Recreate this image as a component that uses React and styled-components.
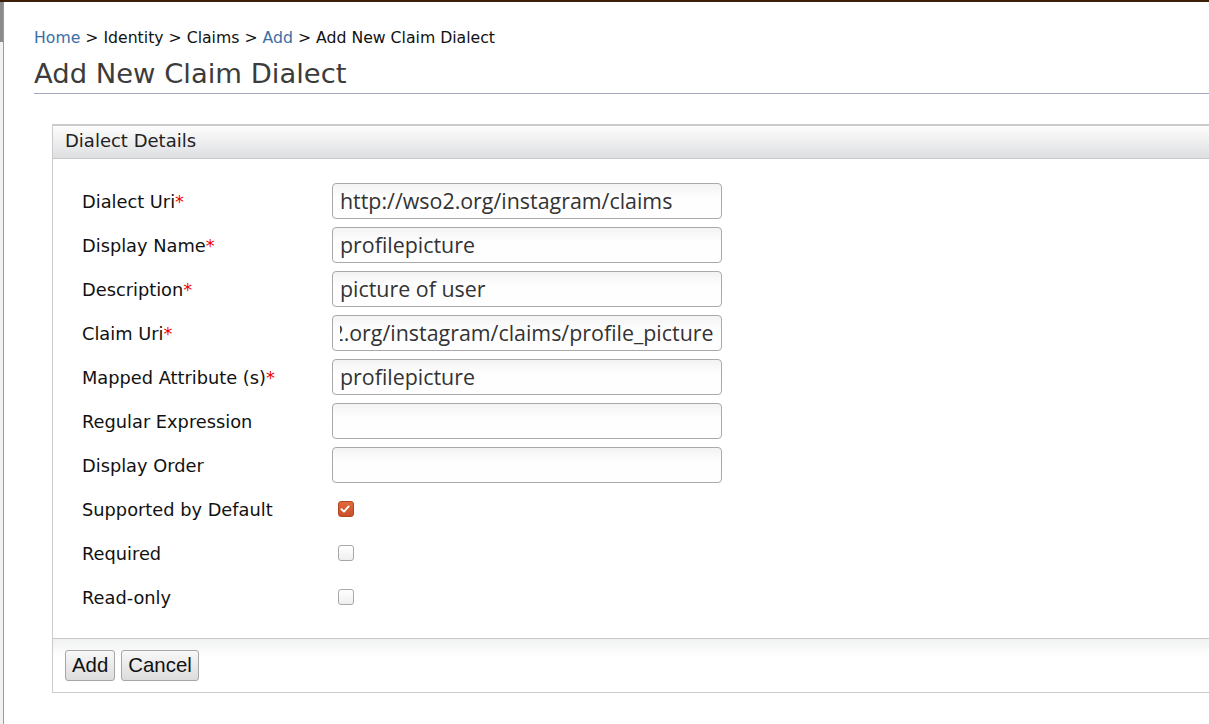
import React, { useEffect, useRef } from 'react';
import styled, { createGlobalStyle } from 'styled-components';

const GlobalStyle = createGlobalStyle`
  html, body {
    margin: 0;
    padding: 0;
    background: #fff;
    overflow: hidden;
    font-family: "DejaVu Sans", Verdana, sans-serif;
  }
`;

const TopBar = styled.div`
  height: 2px;
  background: #3b1f06;
`;

const Shell = styled.div`
  display: flex;
  min-height: 722px;
`;

const SideStrip = styled.div`
  width: 3px;
  flex: none;
  border-right: 1px solid #9a9a9a;
  background: linear-gradient(#8a8a8a 0, #8a8a8a 40px, #f1f1f1 40px);
`;

const Main = styled.div`
  flex: none;
  width: 1260px;
  padding: 27px 0 0 30px;
`;

const Crumbs = styled.div`
  font-size: 15.7px;
  line-height: 18px;
  color: #111;
`;

const CrumbLink = styled.a`
  color: #3a6ea5;
  text-decoration: none;
`;

const Title = styled.h1`
  margin: 9px 0 0;
  font-weight: normal;
  font-size: 27.4px;
  line-height: 36px;
  color: #3c3c3c;
  padding-bottom: 1px;
  border-bottom: 1px solid #a3a9c2;
`;

const Panel = styled.div`
  margin: 30px 0 0 18px;
  border: 1px solid #cbcbcb;
  border-top-width: 2px;
`;

const PanelHeader = styled.div`
  box-sizing: border-box;
  height: 33px;
  padding: 0 0 3px 12px;
  display: flex;
  align-items: center;
  font-size: 18px;
  color: #222;
  background: linear-gradient(#fdfdfd, #dedfe1);
  border-bottom: 1px solid #c9c9c9;
`;

const Form = styled.div`
  display: grid;
  grid-template-columns: 250px 390px;
  grid-auto-rows: 44px;
  align-items: center;
  padding: 20px 0 19px 29px;
`;

const Label = styled.label`
  font-size: 17.8px;
  color: #111;
`;

const Star = styled.span`
  color: #e00;
`;

const TextInput = styled.input`
  box-sizing: border-box;
  width: 390px;
  height: 36px;
  padding: 0 7px 1px;
  border: 1px solid #a9a9a9;
  border-radius: 4px;
  background: linear-gradient(#f3f3f3, #fefefe 40%);
  font-family: "Open Sans", "Noto Sans", sans-serif;
  font-size: 21.4px;
  color: #333;
  outline: none;
`;

const Check = styled.input`
  appearance: none;
  margin: 0 0 0 6px;
  width: 16px;
  height: 16px;
  box-sizing: border-box;
  border-radius: 3px;
  border: 1px solid ${(p) => (p.checked ? '#b3461e' : '#a8a8a8')};
  background: ${(p) => (p.checked ? 'linear-gradient(#e2693a, #c9502a)' : 'linear-gradient(#fff, #efefef)')};
`;

const CheckWrap = styled.span`
  position: relative;
  display: inline-flex;
  width: 22px;
  height: 16px;
`;

const Tick = styled.svg`
  position: absolute;
  left: 8px;
  top: 3px;
  pointer-events: none;
`;

const Footer = styled.div`
  border-top: 1px solid #c9c9c9;
  background: linear-gradient(#f0f1f1, #fff 18px);
  padding: 11px 12px 11px 12px;
  display: flex;
  gap: 6px;
`;

const Button = styled.button`
  height: 31px;
  padding: 0 6px;
  border: 1px solid #a6a6a6;
  border-radius: 3px;
  background: linear-gradient(#f8f8f8, #dcdcdc);
  font-family: "Liberation Sans", Arial, sans-serif;
  font-size: 20.4px;
  color: #111;
`;

const fields = [
  { label: 'Dialect Uri', req: true, value: 'http://wso2.org/instagram/claims' },
  { label: 'Display Name', req: true, value: 'profilepicture' },
  { label: 'Description', req: true, value: 'picture of user' },
  { label: 'Claim Uri', req: true, value: 'http://wso2.org/instagram/claims/profile_picture', end: true },
  { label: 'Mapped Attribute (s)', req: true, value: 'profilepicture' },
  { label: 'Regular Expression', value: '' },
  { label: 'Display Order', value: '' },
];

const checks = [
  { label: 'Supported by Default', checked: true },
  { label: 'Required' },
  { label: 'Read-only' },
];

function Field({ value, end }) {
  const ref = useRef(null);
  useEffect(() => {
    if (end && ref.current) ref.current.scrollLeft = ref.current.scrollWidth;
  }, [end]);
  return <TextInput ref={ref} type="text" defaultValue={value} />;
}

export default function App() {
  return (
    <>
      <GlobalStyle />
      <TopBar />
      <Shell>
        <SideStrip />
        <Main>
          <Crumbs>
            <CrumbLink href="#">Home</CrumbLink> &gt; Identity &gt; Claims &gt;{' '}
            <CrumbLink href="#">Add</CrumbLink> &gt; Add New Claim Dialect
          </Crumbs>
          <Title>Add New Claim Dialect</Title>
          <Panel>
            <PanelHeader>Dialect Details</PanelHeader>
            <Form>
              {fields.map((f) => (
                <React.Fragment key={f.label}>
                  <Label>
                    {f.label}
                    {f.req ? <Star>*</Star> : null}
                  </Label>
                  <Field value={f.value} end={f.end} />
                </React.Fragment>
              ))}
              {checks.map((c) => (
                <React.Fragment key={c.label}>
                  <Label>{c.label}</Label>
                  <CheckWrap>
                    <Check type="checkbox" checked={!!c.checked} readOnly />
                    {c.checked ? (
                      <Tick width="10" height="10" viewBox="0 0 10 10">
                        <path d="M1.5 5.2 L4 7.6 L8.6 2.4" fill="none" stroke="#fff" strokeWidth="1.9" strokeLinecap="round" strokeLinejoin="round" />
                      </Tick>
                    ) : null}
                  </CheckWrap>
                </React.Fragment>
              ))}
            </Form>
            <Footer>
              <Button>Add</Button>
              <Button>Cancel</Button>
            </Footer>
          </Panel>
        </Main>
      </Shell>
    </>
  );
}
